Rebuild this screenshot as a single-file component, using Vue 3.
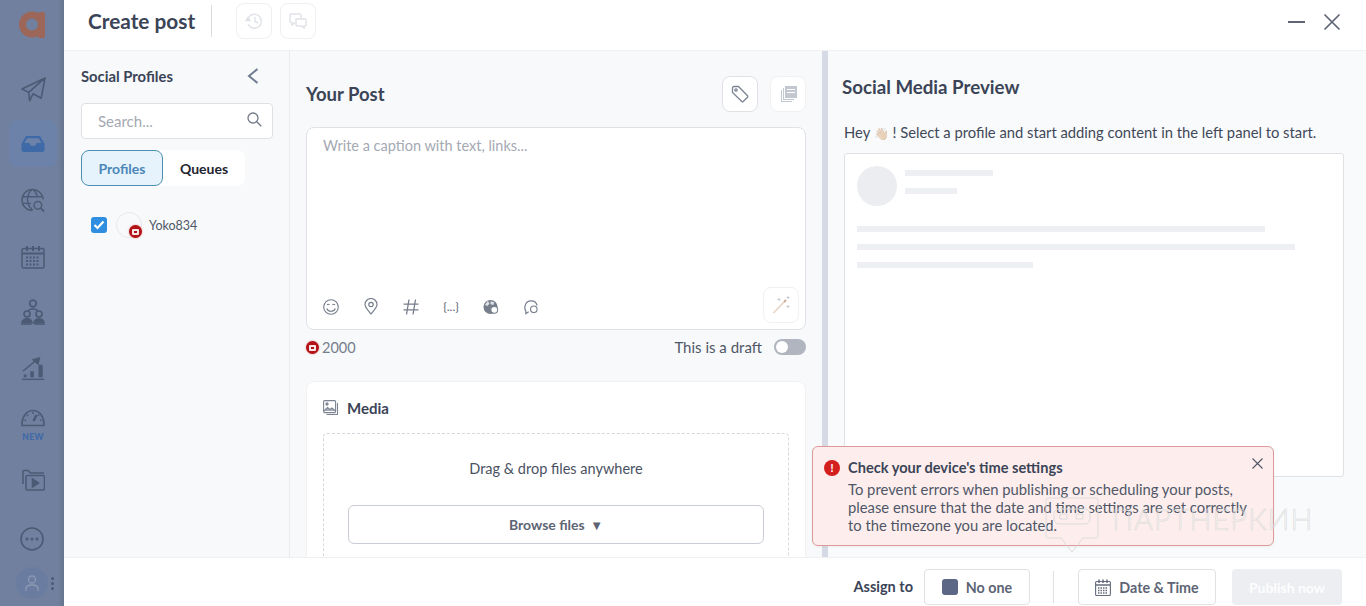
<script setup>
</script>

<template>
  <div class="app">
    <aside class="rail">
      <div class="logo">
        <svg width="26" height="27" viewBox="0 0 26 27" fill="none"><circle cx="13" cy="13.500" r="9.500" stroke="#9c6659" stroke-width="7"/><rect x="19" y="1" width="7" height="26" rx="1.500" fill="#9c6659"/></svg>
      </div>
      <div class="rail-item send">
        <svg width="25" height="25" viewBox="0 0 26 26" fill="none" stroke="#4d5a75" stroke-width="1.700" stroke-linejoin="round"><path d="M25 1 1 12.500l7 3.500L25 1Zm0 0-4 21-8.500-4.500-3.500 7-1-9"/></svg>
      </div>
      <div class="rail-item tile">
        <svg width="24" height="16" viewBox="0 0 26 18"><path fill="#3f6aa8" d="M5 0h16l5 9v6a3 3 0 0 1-3 3H3a3 3 0 0 1-3-3V9l5-9Zm1.500 2.500L3.500 8H9l1.500 3h5L17 8h5.500l-3-5.500h-13Z"/></svg>
      </div>
      <div class="rail-item globe">
        <svg width="25" height="25" viewBox="0 0 26 26" fill="none" stroke="#4d5a75" stroke-width="1.500"><path d="M12 23.500A11 11 0 1 1 23 12M1.500 9h20M1.500 16h9M12 1c-7 6-7 16 0 22M12 1c3.500 3 5 6.500 5 9"/><circle cx="17.500" cy="18" r="4"/><path d="m20.500 21 3.500 3.500" stroke-width="2"/></svg>
      </div>
      <div class="rail-item cal">
        <svg width="24" height="24" viewBox="0 0 24 24" fill="none" stroke="#4d5a75" stroke-width="1.500"><rect x="1" y="3.500" width="22" height="19.500" rx="1.500"/><path d="M1 8.500h22M6 1v5M12 1v5M18 1v5" stroke-width="2"/><path d="M5 12.500h14M5 16h14M5 19.500h14" stroke-width="2" stroke-dasharray="2 1.500"/></svg>
      </div>
      <div class="rail-item net">
        <svg width="24" height="26" viewBox="0 0 24 26" fill="none" stroke="#4d5a75" stroke-width="1.700"><circle cx="12" cy="4.500" r="3.300"/><path d="M7.500 12c.5-2.700 8.500-2.700 9 0" /><circle cx="6" cy="15" r="3"/><circle cx="18" cy="15" r="3"/><path d="M1 24c0-5.500 10-5.500 10 0ZM13 24c0-5.500 10-5.500 10 0Z" fill="#4d5a75"/><path d="M0 25.300h10.500M13.500 25.300H24" stroke-width="1"/></svg>
      </div>
      <div class="rail-item chart">
        <svg width="24" height="25" viewBox="0 0 26 26" fill="#4d5a75"><rect x="1" y="24" width="24" height="1.500"/><rect x="3" y="19.500" width="3" height="3"/><rect x="10" y="16" width="4" height="6.500"/><rect x="19" y="9" width="4.500" height="13.500"/><path d="M2 16 16 4.500M13 3.500l7-2-1.500 6.500Z" stroke="#4d5a75" stroke-width="1.500"/></svg>
      </div>
      <div class="rail-item gauge">
        <svg width="24" height="18" viewBox="0 0 24 18" fill="none" stroke="#4d5a75" stroke-width="1.600"><path d="M1 16.500C.500 8 5.500 1.500 12 1.500S23.500 8 23 16.500H1Z"/><path d="M6 5.500l1 1.500M12 3v2M18 5.500 17 7M3.500 11l1.500.500M20.500 11l-1.500.500"/><path d="m15.500 6-3 6" stroke-width="2.500"/></svg>
        <span class="new">NEW</span>
      </div>
      <div class="rail-item folder">
        <svg width="24" height="22" viewBox="0 0 24 22" fill="none" stroke="#4d5a75" stroke-width="1.600"><path d="M2 15V2.500a1 1 0 0 1 1-1h4l2.500 2.500H23"/><rect x="5" y="6.500" width="18.500" height="14.500" rx="1.500"/><path d="m11.500 10 6 4-6 4Z" fill="#4d5a75"/></svg>
      </div>
      <div class="rail-bottom">
        <svg width="24" height="24" viewBox="0 0 24 24" fill="none" stroke="#4d5a75" stroke-width="1.600"><circle cx="12" cy="12" r="11"/><circle cx="7" cy="12" r="1.500" fill="#4d5a75" stroke="none"/><circle cx="12" cy="12" r="1.500" fill="#4d5a75" stroke="none"/><circle cx="17" cy="12" r="1.500" fill="#4d5a75" stroke="none"/></svg>
        <div class="user-row">
          <div class="avatar">
            <svg width="14" height="17" viewBox="0 0 14 17" fill="none" stroke="#8b98b2" stroke-width="1.300"><circle cx="7" cy="4.500" r="3.500"/><path d="M1 16v-2.500C1 11 3 10 7 10s6 1 6 3.500V16"/></svg>
          </div>
          <div class="dots"><i></i><i></i><i></i></div>
        </div>
      </div>
    </aside>

    <main class="dialog">
      <header class="top">
        <h1 class="title">Create post</h1>
        <div class="vr"></div>
        <button class="ghost">
          <svg width="18" height="18" viewBox="0 0 18 18" fill="none" stroke="#dfe2e7" stroke-width="1.400"><path d="M3 6.500A7 7 0 1 1 3 12"/><path d="M1 8.500h4L3 5.500Z" fill="#dfe2e7"/><path d="M10 5v4.500l3 1.500"/></svg>
        </button>
        <button class="ghost">
          <svg width="18" height="16" viewBox="0 0 18 16" fill="none" stroke="#dfe2e7" stroke-width="1.400"><path d="M12 5V2a1 1 0 0 0-1-1H2a1 1 0 0 0-1 1v6.500a1 1 0 0 0 1 1h1V12l3-2.500"/><path d="M7 6h9.500a1 1 0 0 1 .500 1v5a1 1 0 0 1-1 1H15v2l-2.500-2H8a1 1 0 0 1-1-1V6Z"/></svg>
        </button>
        <div class="win">
          <svg width="17" height="2" viewBox="0 0 17 2"><rect width="17" height="2" fill="#5e6675"/></svg>
          <svg width="18" height="18" viewBox="0 0 18 18" stroke="#5e6675" stroke-width="1.700"><path d="m1.500 1.500 15 15M16.500 1.500l-15 15"/></svg>
        </div>
      </header>

      <div class="body">
        <section class="profiles">
          <div class="prof-head">
            <span>Social Profiles</span>
            <svg width="12" height="16" viewBox="0 0 12 16" fill="none" stroke="#6f7c92" stroke-width="2"><path d="M10.500 1 2 8l8.500 7"/></svg>
          </div>
          <div class="search">
            <span>Search...</span>
            <svg class="search-ic" width="15" height="15" viewBox="0 0 15 15" fill="none" stroke="#727a88" stroke-width="1.300"><circle cx="6" cy="6" r="5"/><path d="m9.800 9.800 4.500 4.500"/></svg>
          </div>
          <div class="tabs">
            <div class="tab on">Profiles</div>
            <div class="tab">Queues</div>
          </div>
          <div class="prof-row">
            <span class="check">
              <svg width="12" height="10" viewBox="0 0 12 10" fill="none" stroke="#fff" stroke-width="2.200"><path d="m1.500 5 3 3 6-6.500"/></svg>
            </span>
            <span class="pic">
              <span class="yt"><i></i></span>
            </span>
            <span class="name">Yoko834</span>
          </div>
        </section>

        <section class="post">
          <div class="post-head">
            <h2>Your Post</h2>
            <div class="post-tools">
              <button class="sq strong">
                <svg width="18" height="18" viewBox="0 0 18 18" fill="none" stroke="#7c8494" stroke-width="1.300"><path d="M1.500 3v4.500L10.800 16.500a1 1 0 0 0 1.400 0l4.300-4.300a1 1 0 0 0 0-1.400L7.500 1.500H3A1.500 1.500 0 0 0 1.500 3Z"/><circle cx="5" cy="5" r="1.200"/></svg>
              </button>
              <button class="sq">
                <svg width="17" height="17" viewBox="0 0 17 17" fill="#c3c7cf"><path d="M5 0h12v12H5z"/><path d="M3 2h1v11h10v1H3z"/><path d="M1 4h1v11h10v1H1z"/><path d="M7 3h8v1H7zM7 6h8v1H7z" fill="#fff"/></svg>
              </button>
            </div>
          </div>

          <div class="composer">
            <div class="placeholder">Write a caption with text, links...</div>
            <div class="composer-foot">
              <div class="tools">
                <span class="slot"><svg width="16" height="16" viewBox="0 0 16 16" fill="none" stroke="#767e8c" stroke-width="1.100"><circle cx="8" cy="8" r="7.300"/><path d="M3.800 9.500c1 3.600 7.400 3.600 8.400 0M4 6c.7-1 1.800-1 2.500 0M9.500 6c.7-1 1.800-1 2.500 0"/></svg></span>
                <span class="slot"><svg width="14" height="17" viewBox="0 0 14 17" fill="none" stroke="#767e8c" stroke-width="1.200"><path d="M7 16C4 12 1 9.500 1 6.500a6 6 0 0 1 12 0C13 9.500 10 12 7 16Z"/><circle cx="7" cy="6.500" r="2.200"/></svg></span>
                <span class="slot"><svg width="16" height="16" viewBox="0 0 16 16" fill="none" stroke="#767e8c" stroke-width="1.300"><path d="M6 .500 3.500 15.500M12.500 .500 10 15.500M.500 5.200h15M.500 10.800h15"/></svg></span>
                <span class="slot braces">{...}</span>
                <span class="slot"><svg width="17" height="16" viewBox="0 0 17 16"><circle cx="8" cy="8" r="7.500" fill="#767e8c"/><path d="M5 1.500 7 4 5 7 2 6ZM8 2l4 1-1 3-3-1ZM8 9l3-1.500L9 13Z" fill="#fff" opacity=".75"/><circle cx="12" cy="11" r="3.600" fill="#fff" stroke="#767e8c" stroke-width="1.100"/></svg></span>
                <span class="slot"><svg width="17" height="16" viewBox="0 0 17 16" fill="none" stroke="#767e8c" stroke-width="1.200"><path d="M3 12.500C.500 8.500 2.500 1.500 8.500 1.500c4 0 6 2.500 6.500 5M3 12v3l3-2"/><circle cx="11.500" cy="10.500" r="3.500"/></svg></span>
              </div>
              <button class="sq wand">
                <svg width="22" height="22" viewBox="0 0 22 22" fill="none"><path d="m3.500 19 10.500-11" stroke="#ead6c6" stroke-width="1.800"/><path d="m14 8 2-2" stroke="#c9a98f" stroke-width="2"/><path d="M9 4v3M7.500 5.500h3M18 2v3M16.500 3.500h3M18 11v3M16.500 12.500h3" stroke="#c6cad1" stroke-width="1"/></svg>
              </button>
            </div>
          </div>

          <div class="meta">
            <div class="count"><span class="yt big"><i></i></span>2000</div>
            <div class="draft">
              <span>This is a draft</span>
              <span class="switch"><i></i></span>
            </div>
          </div>

          <div class="media">
            <div class="media-head">
              <svg width="16" height="16" viewBox="0 0 16 16" fill="none" stroke="#7d8594" stroke-width="1.100"><rect x=".600" y=".600" width="12" height="12" rx="1"/><circle cx="4" cy="4" r="1.100" fill="#7d8594"/><path d="m1 11 3.500-3.500 2.500 2 2-1.500 3.500 3" fill="#a8aeb9"/><path d="M14.500 3v11.500H3.500"/></svg>
              <span>Media</span>
            </div>
            <div class="drop">
              <div class="drop-text">Drag &amp; drop files anywhere</div>
              <button class="browse">Browse files <span class="tri">▼</span></button>
            </div>
          </div>
        </section>

        <div class="split"></div>

        <section class="preview">
          <h2>Social Media Preview</h2>
          <p class="hey">Hey <span class="wave">👋🏼</span> ! Select a profile and start adding content in the left panel to start.</p>
          <div class="skeleton">
            <div class="sk-top">
              <div class="sk-circle"></div>
              <div class="sk-lines">
                <div class="bar w88"></div>
                <div class="bar w52"></div>
              </div>
            </div>
            <div class="bar w408"></div>
            <div class="bar w438"></div>
            <div class="bar w176"></div>
          </div>
        </section>
      </div>

      <footer class="foot">
        <span class="assign">Assign to</span>
        <button class="fbtn noone"><i class="swatch"></i>No one</button>
        <div class="fvr"></div>
        <button class="fbtn date">
          <svg width="16" height="17" viewBox="0 0 16 17" fill="none" stroke="#646c7c" stroke-width="1.100"><rect x=".600" y="2.500" width="14.800" height="14" rx="1"/><path d="M.600 6h14.800M4 .500v3.500M8 .500v3.500M12 .500v3.500" stroke-width="1.500"/><path d="M3 9h10M3 11.500h10M3 14h10" stroke-width="1.400" stroke-dasharray="1.500 1"/></svg>
          Date &amp; Time
        </button>
        <button class="publish">Publish now</button>
      </footer>
    </main>

    <div class="toast">
      <span class="err">!</span>
      <div class="toast-text">
        <strong>Check your device's time settings</strong>
        <p>To prevent errors when publishing or scheduling your posts,<br>please ensure that the date and time settings are set correctly<br>to the timezone you are located.</p>
      </div>
      <svg class="toast-x" width="11" height="11" viewBox="0 0 11 11" stroke="#4f5767" stroke-width="1.100"><path d="m.500.500 10 10M10.500.500l-10 10"/></svg>
    </div>

    <div class="mark">
      <svg width="54" height="56" viewBox="0 0 54 56" fill="none" stroke="#dcdcdc" stroke-width="1"><path d="M3 1h48a2 2 0 0 1 2 2v36a2 2 0 0 1-2 2H38l-11 14-11-14H3a2 2 0 0 1-2-2V3a2 2 0 0 1 2-2Z"/><rect x="9" y="12" width="36" height="15" rx="5"/><path d="M15 17h7v5h-7zM31 17h7v5h-7z"/></svg>
      <span>ПАРТНЕРКИН</span>
    </div>
  </div>
</template>

<style>
html, body { margin: 0; padding: 0; background: #fff; overflow: hidden; }
</style>

<style scoped>
* { box-sizing: border-box; }
button { font-family: inherit; padding: 0; cursor: default; }
h1, h2, p { margin: 0; }
.app {
  width: 1366px; height: 606px; display: flex; position: relative; overflow: hidden;
  font-family: Lato, "Noto Sans", sans-serif; color: #3b4457; background: #fff;
}
.rail {
  width: 64px; flex: none; background: linear-gradient(90deg, #70809e 0, #70809e 58px, #66748d 64px);
  display: flex; flex-direction: column; align-items: center; position: relative;
}
.logo { height: 60px; width: 64px; display: flex; justify-content: center; align-items: flex-start; padding-top: 11px; }
.rail-item { width: 48px; margin-left: 2px; display: flex; align-items: center; justify-content: center; flex: none; }
.send { height: 58px; margin-bottom: 2px; }
.tile { height: 47px; background: #6c82a8; border-radius: 8px; }
.globe { height: 66px; }
.cal { height: 48px; }
.net { height: 62px; }
.chart { height: 50px; }
.gauge { height: 59px; flex-direction: column; justify-content: flex-start; padding-top: 16px; gap: 6px; }
.folder { height: 56px; }
.new { font: 900 8.500px/9px Lato, sans-serif; color: #3f6aa8; letter-spacing: .3px; }
.rail-bottom { margin-top: auto; display: flex; flex-direction: column; align-items: center; gap: 16px; padding-bottom: 7px; }
.user-row { display: flex; align-items: center; gap: 3px; margin-left: 6px; }
.avatar { width: 32px; height: 32px; border-radius: 50%; background: #6a7da0; display: flex; align-items: center; justify-content: center; }
.dots { display: flex; flex-direction: column; gap: 2px; }
.dots i { width: 3px; height: 3px; border-radius: 50%; background: #4d5a75; display: block; }

.dialog { flex: 1; display: flex; flex-direction: column; min-width: 0; }
.top { height: 51px; flex: none; display: flex; align-items: center; padding: 0 25px 8px 24px; border-bottom: 1px solid #f0f1f3; }
.title { font: 700 20.800px/26px Lato, sans-serif; color: #3b4457; }
.vr { width: 1px; height: 32px; background: #d9dbe0; margin: 0 24px 0 16px; }
.ghost { width: 36px; height: 36px; border: 1px solid #eeeff1; border-radius: 8px; background: #fff; margin-right: 8px; display: flex; align-items: center; justify-content: center; }
.win { margin-left: auto; display: flex; align-items: center; gap: 18px; margin-top: 2px; }

.body { flex: 1; display: flex; min-height: 0; background: #f8f9fa; }
.profiles { width: 226px; flex: none; border-right: 1px solid #e9ebee; padding: 16px 17px; }
.prof-head { display: flex; justify-content: space-between; align-items: center; height: 18px; font: 700 14.800px/18px Lato, sans-serif; color: #3b4457; padding-right: 13px; margin-bottom: 18px; }
.search { width: 192px; height: 36px; background: #fff; border: 1px solid #dfe1e5; border-radius: 4px; display: flex; align-items: center; justify-content: space-between; padding: 0 10px 0 16px; font-size: 15px; color: #a4a9b3; margin-bottom: 11px; }
.search-ic { margin-top: -3px; }
.tabs { display: flex; width: 164px; height: 36px; background: #fff; border-radius: 8px; }
.tab { width: 82px; display: flex; align-items: center; justify-content: center; font: 700 14px Lato, sans-serif; color: #1f2530; border-radius: 8px; }
.tab.on { background: #e6f3fc; border: 1px solid #4c8fb5; color: #4c86b8; }
.prof-row { display: flex; align-items: center; margin: 25px 0 0 10px; height: 28px; }
.check { width: 16px; height: 16px; background: #2f8ee0; border-radius: 3px; display: flex; align-items: center; justify-content: center; }
.pic { width: 26px; height: 26px; border: 1px solid #e8e9ec; border-radius: 50%; margin-left: 9px; position: relative; }
.pic .yt { position: absolute; right: -1px; bottom: -1px; }
.yt { width: 13px; height: 13px; background: #b31217; border-radius: 50%; display: flex; align-items: center; justify-content: center; box-shadow: 0 0 2px rgba(200,30,30,.5); }
.yt i { width: 7px; height: 6px; border-radius: 1px; background: radial-gradient(circle, #b31217 0 1.200px, #f7e6e6 1.500px); }
.yt.big { margin-right: 3px; }
.name { font-size: 12.500px; color: #4f5767; margin-left: 7px; }

.post { width: 532px; flex: none; padding: 0 16px; overflow: hidden; }
.post-head { height: 76px; display: flex; align-items: center; justify-content: space-between; padding-top: 10px; }
.post-head h2 { font: 700 18.500px/24px Lato, sans-serif; color: #3b4457; }
.post-tools { display: flex; gap: 12px; }
.sq { width: 36px; height: 36px; border: 1px solid #f0f1f3; border-radius: 8px; background: #fff; display: flex; align-items: center; justify-content: center; }
.sq.strong { border-color: #dfe1e5; }
.composer { height: 203px; background: #fff; border: 1px solid #dfe1e5; border-radius: 8px; padding: 9px 6px 6px 16px; display: flex; flex-direction: column; justify-content: space-between; }
.placeholder { font-size: 14.500px; color: #a4a9b3; line-height: 18px; }
.composer-foot { display: flex; justify-content: space-between; align-items: center; }
.tools { display: flex; align-items: center; gap: 24px; padding-top: 3px; }
.slot { width: 16px; height: 18px; display: flex; align-items: center; justify-content: center; flex: none; }
.braces { font: 400 12px/16px Lato, sans-serif; color: #5d6575; white-space: nowrap; }
.wand { border-color: #f0f1f3; }
.meta { display: flex; justify-content: space-between; align-items: center; height: 18px; margin-top: 8px; }
.count { display: flex; align-items: center; font-size: 14.500px; color: #767e8c; margin-top: 1px; }
.draft { display: flex; align-items: center; gap: 12px; font-size: 15px; color: #4f5767; }
.switch { width: 32px; height: 16px; background: #b0b5c0; border-radius: 8px; padding: 2px; display: block; }
.switch i { width: 12px; height: 12px; border-radius: 50%; background: #fff; display: block; }
.media { margin-top: 25px; background: #fff; border: 1px solid #f0f1f3; border-radius: 8px; padding: 16px 16px 0; height: 260px; }
.media-head { display: flex; align-items: center; gap: 8px; font: 700 15px/20px Lato, sans-serif; color: #3b4457; }
.drop { margin-top: 15px; height: 220px; border: 1px dashed #d5d8de; border-radius: 4px; padding: 26px 24px; text-align: center; }
.drop-text { font-size: 14.500px; line-height: 18px; color: #4a5262; }
.browse { width: 416px; height: 39px; margin-top: 27px; border: 1px solid #c9cdd4; border-radius: 6px; background: #fff; font: 700 14px Lato, sans-serif; color: #5d6575; }
.tri { font-size: 13px; margin-left: 2px; }
.split { width: 6px; flex: none; background: #d5dae4; }
.preview { flex: 1; padding: 0 22px 0 14px; min-width: 0; background: #f9fafb; }
.preview h2 { font: 700 18.700px/24px Lato, sans-serif; color: #3b4457; margin-top: 24px; }
.hey { font-size: 14.750px; line-height: 20px; color: #3f4859; margin: 23px 0 9px 2px; white-space: nowrap; }
.wave { font-size: 12px; opacity: .6; font-family: "Noto Sans", sans-serif; }
.skeleton { margin-left: 2px; width: 500px; height: 324px; background: #fff; border: 1px solid #dfe1e5; border-radius: 3px; padding: 12px; }
.sk-top { display: flex; gap: 8px; margin-bottom: 20px; }
.sk-circle { width: 40px; height: 40px; border-radius: 50%; background: #ecedf0; }
.sk-lines { padding-top: 4px; }
.bar { height: 6px; background: #eeeff2; }
.sk-lines .bar + .bar { margin-top: 12px; }
.skeleton > .bar { margin-bottom: 12px; }
.w88 { width: 88px; } .w52 { width: 52px; } .w408 { width: 408px; } .w438 { width: 438px; } .w176 { width: 176px; }

.foot { height: 49px; flex: none; display: flex; align-items: flex-start; justify-content: flex-end; padding: 11px 24px 0 0; background: #fff; border-top: 1px solid #eef0f2; }
.assign { font: 700 14.500px/36px Lato, sans-serif; color: #3b4457; margin-right: 11px; }
.fbtn { height: 36px; border: 1px solid #dfe1e5; border-radius: 4px; background: #fff; font: 700 14.300px Lato, sans-serif; color: #5d6575; display: flex; align-items: center; justify-content: center; }
.noone { width: 106px; gap: 8px; }
.swatch { width: 16px; height: 16px; background: #5b6784; border-radius: 3px; display: block; }
.fvr { width: 1px; height: 32px; background: #dfe1e5; margin: 2px 24px 0 23px; }
.date { width: 138px; gap: 8px; }
.publish { width: 110px; height: 36px; margin-left: 16px; background: #eceef1; border: none; border-radius: 4px; color: #fdfdfe; font: 700 14px Lato, sans-serif; }

.toast { position: absolute; left: 812px; top: 446px; width: 462px; height: 100px; background: #fdeeed; border: 1px solid #dc9a9a; border-radius: 6px; padding: 12px 11px; display: flex; gap: 8px; box-shadow: 0 1px 3px rgba(0,0,0,.05); }
.err { width: 16px; height: 16px; flex: none; margin-top: 1px; background: #d41f1f; color: #fff; border-radius: 50%; font: 700 11px/16px Lato, sans-serif; text-align: center; }
.toast-text strong { display: block; font: 700 14.600px/18px Lato, sans-serif; color: #3b4457; }
.toast-text p { font-size: 14.800px; line-height: 18px; color: #4f5767; margin-top: 3px; white-space: nowrap; }
.toast-x { position: absolute; right: 10px; top: 11px; }
.mark { position: absolute; left: 1045px; top: 497px; display: flex; gap: 13px; align-items: flex-start; pointer-events: none; }
.mark span { font: 300 29px/1 Lato, sans-serif; color: transparent; -webkit-text-stroke: .6px #dcdcdc; margin-top: 7px; letter-spacing: 1px; }
</style>
